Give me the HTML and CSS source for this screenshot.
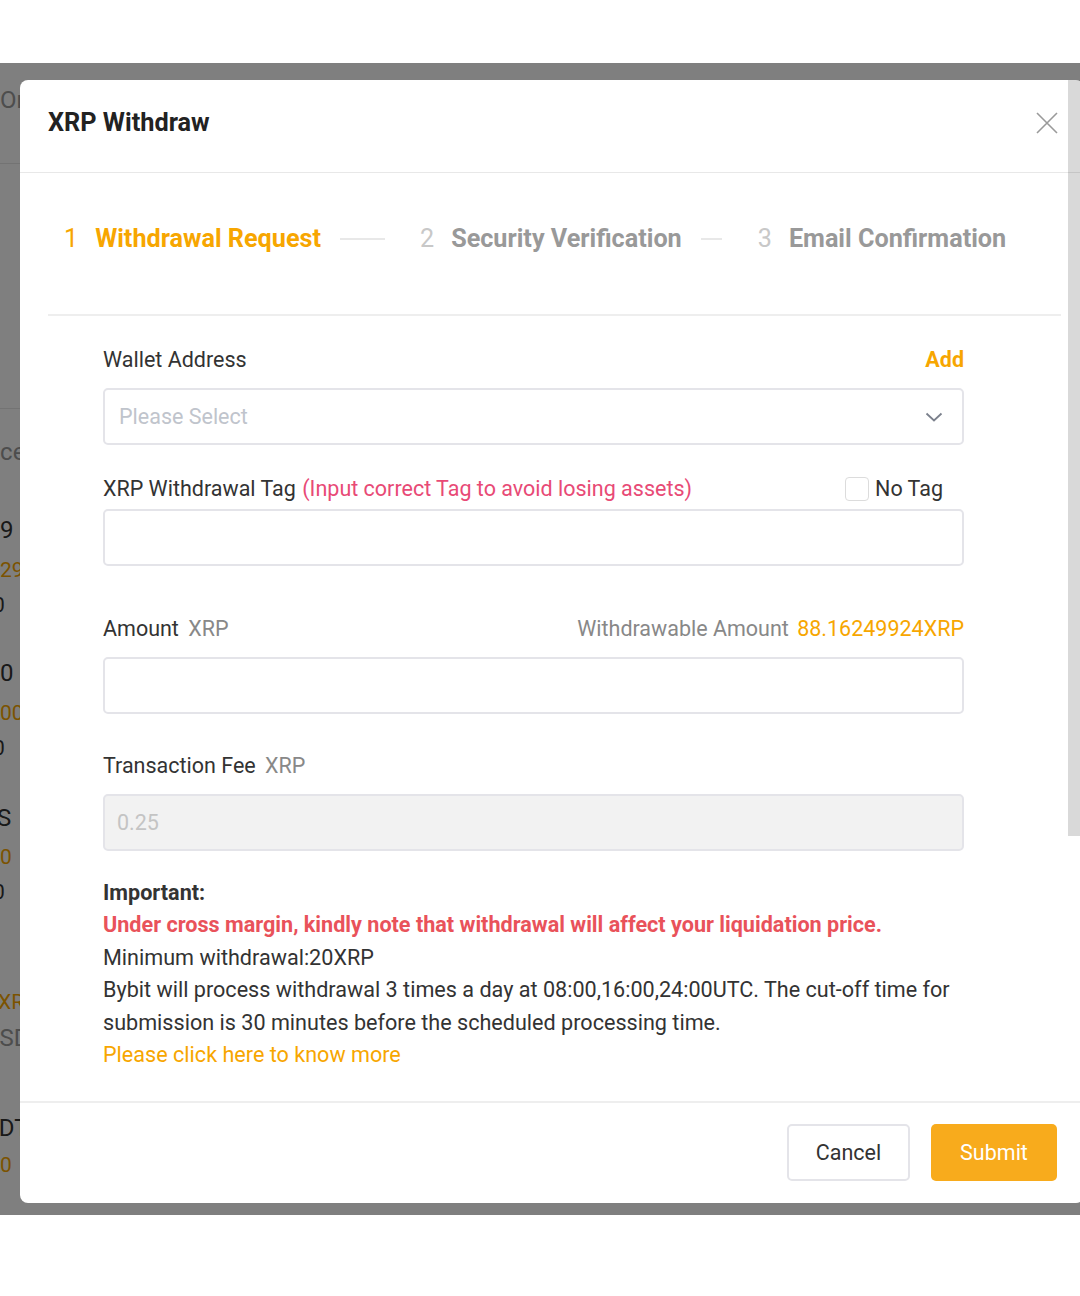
FILE: index.html
```html
<!DOCTYPE html>
<html>
<head>
<meta charset="utf-8">
<link rel="stylesheet" href="styles.css">
</head>
<body>
<div class="frame">
  <div class="backdrop">
    <div class="bk g">Order</div>
    <div class="bk-line"></div>
    <div class="bk-line"></div>
    <div class="bk g m29">Price</div>
    <div class="bk d">9</div>
    <div class="bk o sm">29</div>
    <div class="bk d sm m7">0</div>
    <div class="bk d">0</div>
    <div class="bk o sm">00</div>
    <div class="bk d sm m7">0</div>
    <div class="bk d m3">S</div>
    <div class="bk o sm">0</div>
    <div class="bk d sm m7">0</div>
    <div class="bk o sm m2">XR</div>
    <div class="bk g m16">USD</div>
    <div class="bk d m31">USDT</div>
    <div class="bk o sm">0</div>
  </div>
  <div class="overlay"></div>

  <div class="modal">
    <div class="modal-header">
      <h1 class="title">XRP Withdraw</h1>
      <svg class="close" width="22" height="22" viewBox="0 0 22 22"><path d="M1 1L21 21M21 1L1 21" stroke="#9a9a9a" stroke-width="1.6" fill="none"/></svg>
    </div>

    <div class="steps">
      <div class="step active"><span class="num">1</span><span class="stitle">Withdrawal Request</span></div>
      <span class="sline long"></span>
      <div class="step"><span class="num">2</span><span class="stitle">Security Verification</span></div>
      <span class="sline short"></span>
      <div class="step"><span class="num">3</span><span class="stitle">Email Confirmation</span></div>
    </div>

    <div class="form">
      <div class="row">
        <span class="label">Wallet Address</span>
        <span class="add">Add</span>
      </div>
      <div class="box select">
        <span class="placeholder">Please Select</span>
        <svg width="18" height="10" viewBox="0 0 18 10"><path d="M1.5 1.5L9 8.5L16.5 1.5" stroke="#7b808c" stroke-width="1.8" fill="none"/></svg>
      </div>

      <div class="row tagrow">
        <span class="label">XRP Withdrawal Tag <span class="warn-pink">(Input correct Tag to avoid losing assets)</span></span>
        <label class="notag"><span class="checkbox"></span>No Tag</label>
      </div>
      <div class="box tagbox"></div>

      <div class="row amountrow">
        <span class="label">Amount <span class="unit">XRP</span></span>
        <span class="avail"><span class="unit2">Withdrawable Amount</span> <span class="orange">88.16249924XRP</span></span>
      </div>
      <div class="box"></div>

      <div class="row feerow">
        <span class="label">Transaction Fee <span class="unit">XRP</span></span>
      </div>
      <div class="box disabled"><span class="fee">0.25</span></div>

      <div class="notes">
        <p class="imp">Important:</p>
        <p class="red">Under cross margin, kindly note that withdrawal will affect your liquidation price.</p>
        <p>Minimum withdrawal:20XRP</p>
        <p>Bybit will process withdrawal 3 times a day at 08:00,16:00,24:00UTC. The cut-off time for submission is 30 minutes before the scheduled processing time.</p>
        <p class="orange">Please click here to know more</p>
      </div>
    </div>

    <div class="footer">
      <button class="btn cancel">Cancel</button>
      <button class="btn submit">Submit</button>
    </div>
  </div>
  <div class="scrollthumb"></div>
</div>
</body>
</html>
```

FILE: styles.css
```css
* { box-sizing: border-box; }
html, body { margin: 0; padding: 0; background: #ffffff; }
body {
  font-family: Roboto, "Liberation Sans", Arial, sans-serif;
  color: #333333;
  width: 1080px;
  height: 1296px;
  overflow: hidden;
}
.frame {
  position: relative;
  margin-top: 63px;
  height: 1152px;
  width: 1080px;
  overflow: hidden;
  background: #ffffff;
}
.backdrop {
  display: grid;
  grid-template-rows: 78px 245px 29px 78px 40px 35px 68px 40px 35px 70px 39px 35px 110px 36px 90px 37px 30px;
  padding-top: 22px;
  font-size: 24px;
  line-height: 30px;
  white-space: nowrap;
}
.bk { align-self: start; }
.bk.g { color: #9a9a9a; }
.bk.d { color: #333333; }
.bk.o { color: #f7a600; }
.bk.sm { font-size: 21px; }
.m2 { margin-left: -2px; }
.m3 { margin-left: -3px; }
.m7 { margin-left: -7px; }
.m16 { margin-left: -16px; }
.m29 { margin-left: -29px; }
.m31 { margin-left: -31px; }
.bk-line { height: 1px; background: #e6e6e6; align-self: start; }

.overlay {
  position: absolute;
  inset: 0;
  background: rgba(0, 0, 0, 0.5);
}
.modal {
  position: absolute;
  left: 20px;
  top: 17px;
  width: 1064px;
  background: #ffffff;
  border-radius: 8px;
}
.modal-header {
  display: flex;
  justify-content: space-between;
  align-items: center;
  padding: 29px 26px 35px 28px;
  border-bottom: 1px solid #e8e8e8;
}
.title {
  margin: 0;
  font-size: 25.3px;
  line-height: 28px;
  font-weight: 700;
  color: #222222;
}
.close { display: block; margin-top: 0; }

.steps {
  display: flex;
  align-items: center;
  margin: 0 23px 0 28px;
  padding: 52px 0 61px 16px;
  border-bottom: 2px solid #eeeeee;
  font-size: 25.2px;
  line-height: 28px;
  white-space: nowrap;
}
.step { display: flex; align-items: center; }
.num { color: #c8c8c8; font-weight: 400; margin-right: 17px; }
.stitle { color: #999999; font-weight: 700; }
.step.active .num { color: #f7a600; }
.step.active .stitle { color: #f7a600; }
.sline { display: block; height: 2px; background: #e8e8e8; margin: 0 35px 0 19px; }
.sline.long { width: 45px; }
.sline.short { width: 21px; margin-right: 36px; }

.form {
  padding: 32px 120px 30px 83px;
  font-size: 21.5px;
}
.row {
  display: flex;
  justify-content: space-between;
  align-items: center;
  height: 24px;
  line-height: 24px;
  margin-bottom: 16px;
}
.label { color: #333333; }
.add { color: #f7a600; font-weight: 700; }
.box {
  height: 57px;
  border: 2px solid #e4e4e9;
  border-radius: 5px;
  display: flex;
  align-items: center;
  justify-content: space-between;
  padding: 0 19px 0 14px;
}
.placeholder { color: #c0c4cc; }
.tagrow { margin-top: 30px; height: 28px; line-height: 28px; margin-bottom: 6px; }
.warn-pink { color: #e84a76; margin-left: 1px; }
.notag { display: flex; align-items: center; margin-right: 21px; color: #333; }
.checkbox {
  width: 24px;
  height: 24px;
  border: 1.5px solid #dcdcdc;
  border-radius: 4px;
  margin-right: 6px;
}
.amountrow { margin-top: 51px; }
.unit { color: #888888; margin-left: 4px; }
.unit2 { color: #888888; margin-right: 3px; }
.orange { color: #f7a600; }
.feerow { margin-top: 40px; }
.disabled { background: #f2f2f2; }
.fee { color: #c4c4c4; margin-left: -2px; }
.notes {
  margin-top: 26px;
  line-height: 32.4px;
  color: #333333;
  font-size: 21.6px;
}
.notes p { margin: 0; }
.notes .imp { font-weight: 700; }
.notes .red { color: #e9525a; font-weight: 700; }
.footer {
  border-top: 2px solid #eeeeee;
  display: flex;
  justify-content: flex-end;
  gap: 21px;
  padding: 21px 27px 22px 0;
}
.btn {
  font-family: Roboto, "Liberation Sans", Arial, sans-serif;
  font-size: 21.5px;
  height: 57px;
  border-radius: 5px;
}
.cancel {
  width: 123px;
  background: #ffffff;
  border: 2px solid #e4e4e9;
  color: #333333;
}
.submit {
  width: 126px;
  background: #f8ab1c;
  border: none;
  color: #ffffff;
}
.scrollthumb {
  position: absolute;
  right: 0;
  top: 17px;
  width: 12px;
  height: 756px;
  background: rgba(0, 0, 0, 0.15);
}
```
